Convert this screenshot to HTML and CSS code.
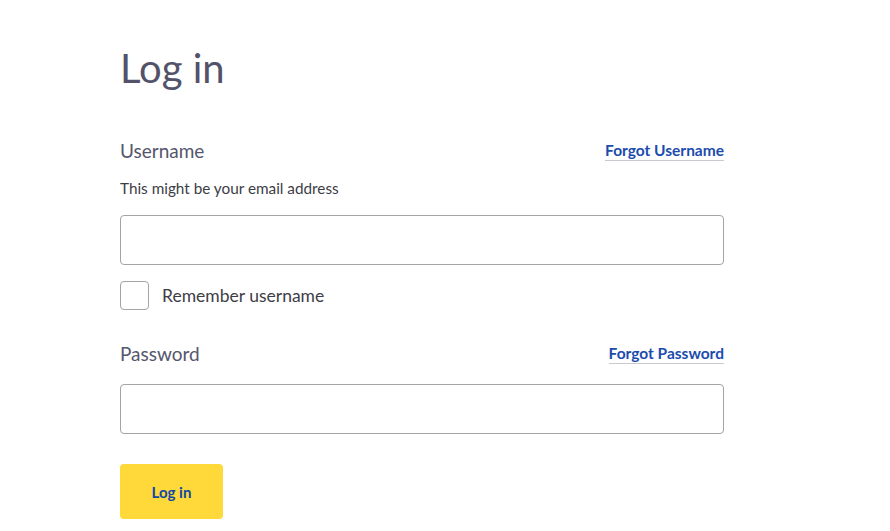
FILE: index.html
```html
<!DOCTYPE html>
<html lang="en">
<head>
  <meta charset="UTF-8" />
  <title>Log in</title>
  <link rel="stylesheet" href="styles.css">
</head>
<body>
  <div class="page">
    <form class="login-form">
      <h1>Log in</h1>

      <div class="field">
        <div class="field-head">
          <label for="username">Username</label>
          <a href="#" class="help-link">Forgot Username</a>
        </div>
        <p class="hint">This might be your email address</p>
        <input type="text" id="username" class="text-input" />
      </div>

      <label class="remember">
        <input type="checkbox" />
        <span class="box"></span>
        Remember username
      </label>

      <div class="field">
        <div class="field-head">
          <label for="password">Password</label>
          <a href="#" class="help-link">Forgot Password</a>
        </div>
        <input type="password" id="password" class="text-input" />
      </div>

      <button type="submit" class="submit-btn">Log in</button>
    </form>
  </div>
</body>
</html>
```

FILE: styles.css
```css
body {
  font-family: 'Lato', sans-serif;
  margin: 0;
  background-color: #ffffff;
  color: #3d3d4a;
  overflow: hidden;
}

.page {
  padding: 36px 120px 0 120px;
}

.login-form {
  width: 604px;
}

h1 {
  font-size: 40px;
  font-weight: 400;
  color: #52536b;
  margin: 0 0 39px 0;
  line-height: 64px;
}

.field {
  margin-bottom: 14px;
}

.field-head {
  display: flex;
  justify-content: space-between;
  align-items: center;
}

.field-head label {
  font-size: 19px;
  color: #55566d;
}

.field-head + .text-input {
  margin-top: 19px;
}

.help-link {
  font-size: 15.5px;
  font-weight: 700;
  color: #1b4cad;
  text-decoration: none;
  border-bottom: 1px solid #c9c9cf;
  padding-bottom: 1px;
}

.hint {
  font-size: 15.3px;
  color: #3d3d46;
  margin: 17px 0 18px 0;
}

.text-input {
  display: block;
  box-sizing: border-box;
  width: 100%;
  height: 50px;
  border: 1px solid #a3a3a8;
  border-radius: 4px;
  font-size: 18px;
  padding: 0 12px;
}

.remember {
  display: flex;
  align-items: center;
  gap: 13px;
  font-size: 17.5px;
  color: #3d3d46;
  margin-top: 16px;
  margin-bottom: 32px;
}

.remember input {
  display: none;
}

.remember .box {
  width: 27px;
  height: 27px;
  border: 1px solid #a3a3a8;
  border-radius: 4px;
}

.submit-btn {
  margin-top: 16px;
  background-color: #ffd83a;
  color: #1048a6;
  border: none;
  border-radius: 4px;
  width: 103px;
  height: 55px;
  font-family: 'Lato', sans-serif;
  font-size: 15px;
  font-weight: 700;
  cursor: pointer;
}
```
